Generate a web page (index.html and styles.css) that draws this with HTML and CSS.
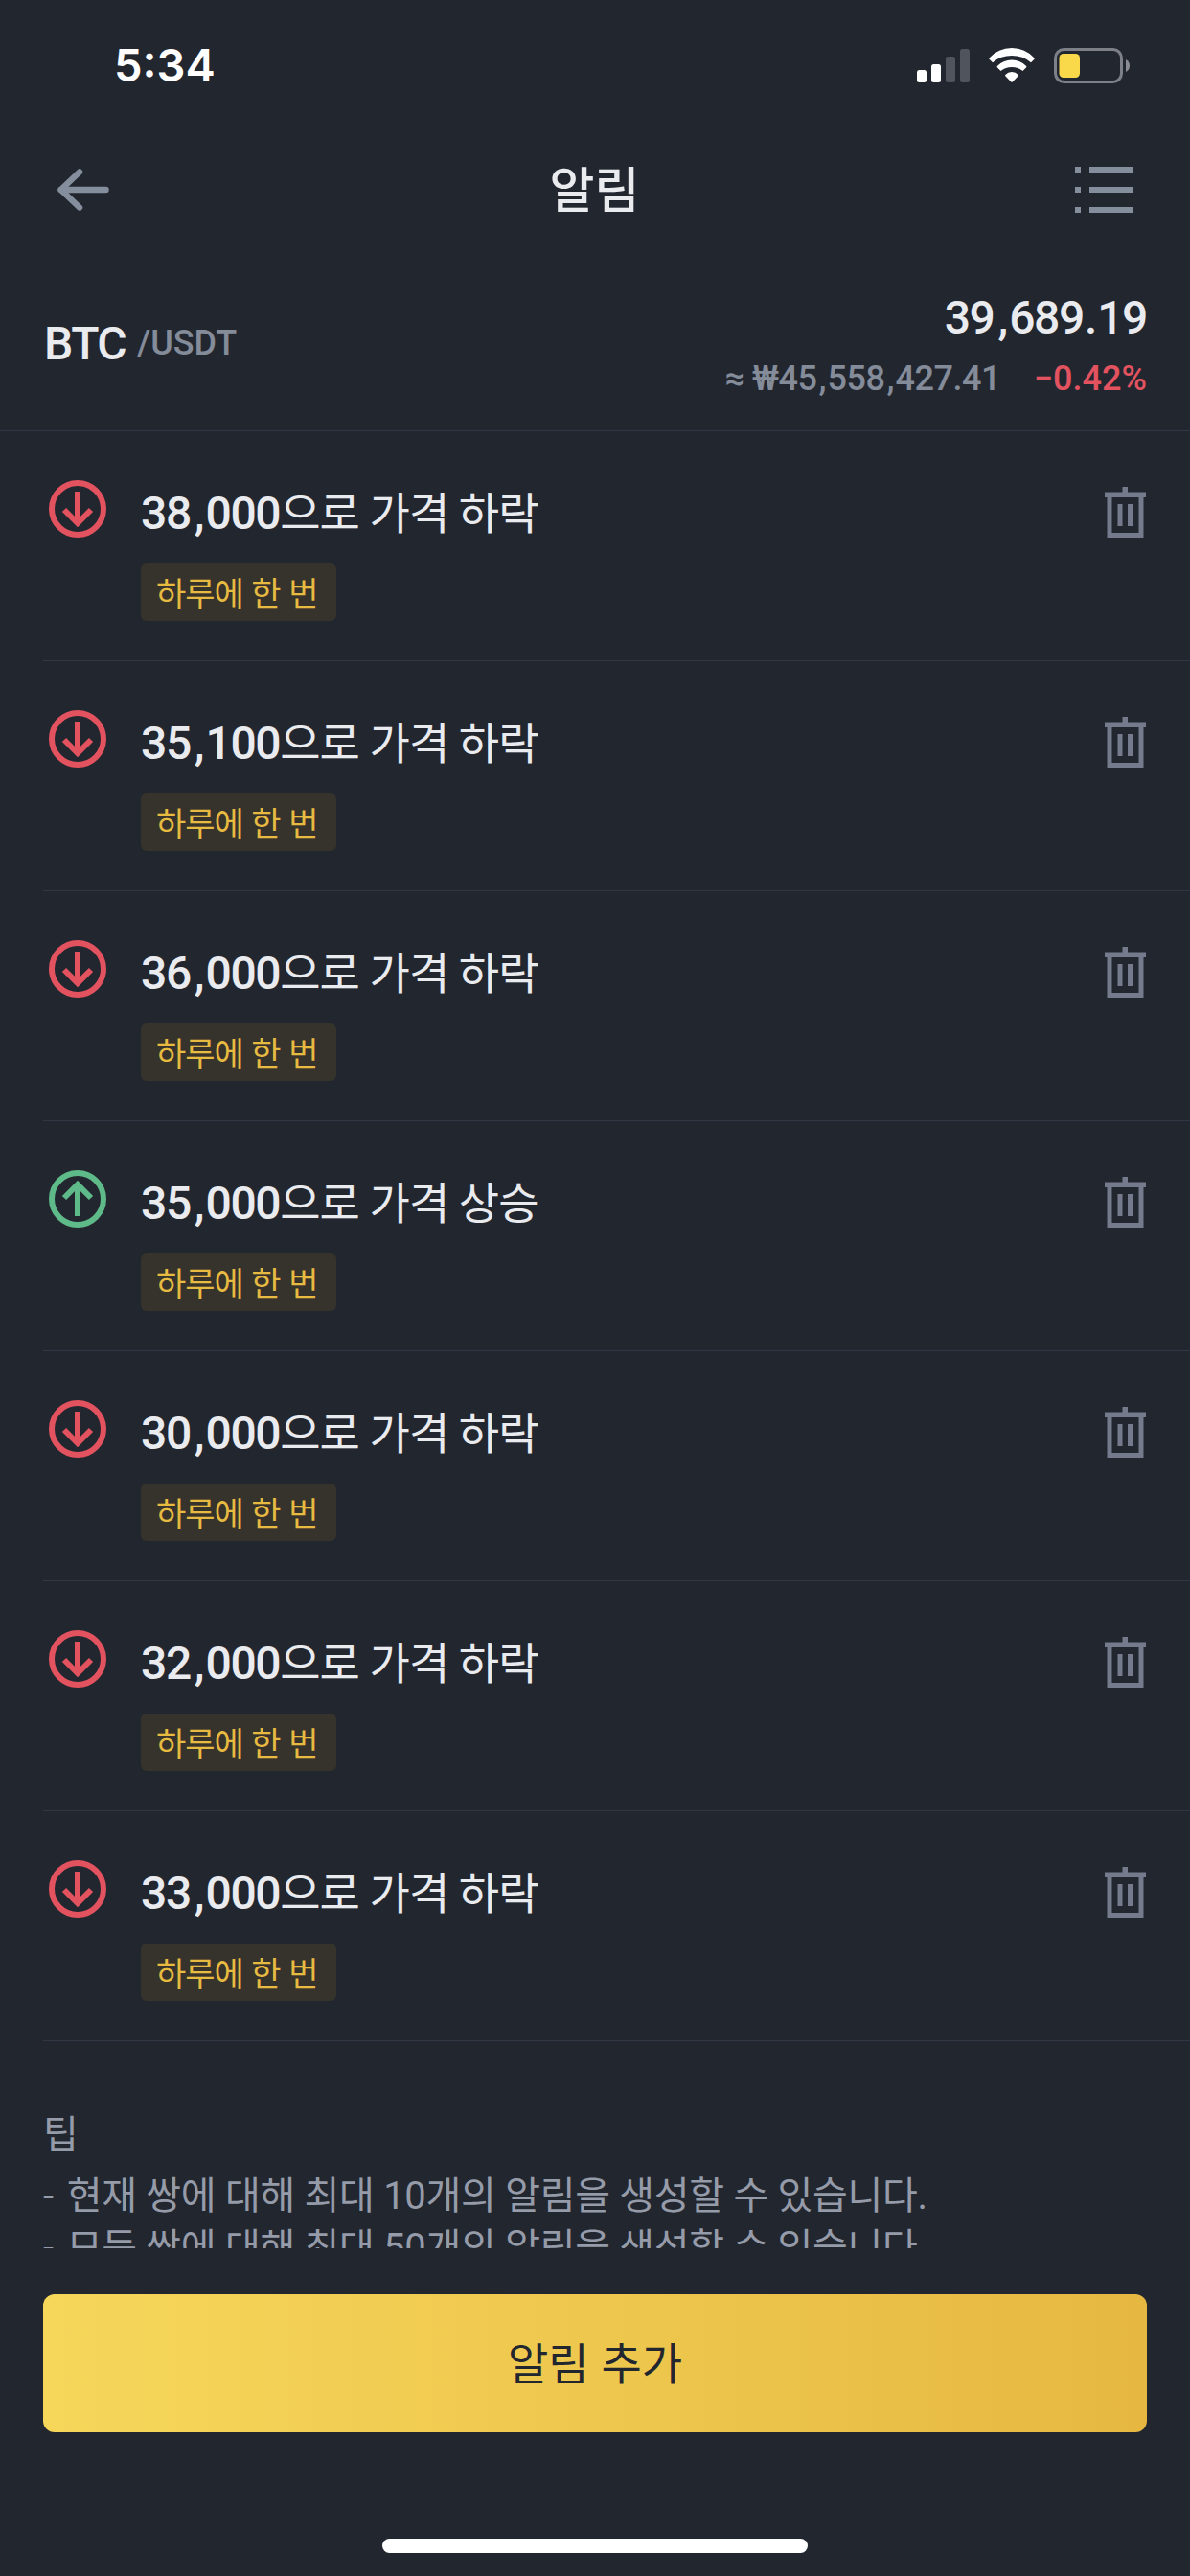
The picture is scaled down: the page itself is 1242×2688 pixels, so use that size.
FILE: index.html
```html
<!DOCTYPE html>
<html lang="ko">
<head>
  <meta charset="UTF-8">
  <meta name="viewport" content="width=device-width, initial-scale=1.0">
  <title>알림</title>
  <link rel="stylesheet" href="styles.css">
</head>
<body>
  <!-- shared icons -->
  <svg class="defs" width="0" height="0">
    <symbol id="down" viewBox="0 0 60 60">
      <circle cx="30" cy="30" r="27" fill="none" stroke="currentColor" stroke-width="6"/>
      <path d="M30 12v33M16 31l14 14 14-14" fill="none" stroke="currentColor" stroke-width="6"/>
    </symbol>
    <symbol id="up" viewBox="0 0 60 60">
      <circle cx="30" cy="30" r="27" fill="none" stroke="currentColor" stroke-width="6"/>
      <path d="M30 48V15M16 29l14-14 14 14" fill="none" stroke="currentColor" stroke-width="6"/>
    </symbol>
    <symbol id="trash" viewBox="0 0 43 53">
      <path d="M18.500 0h5.500v5.500h19v5.500h-2.500v42h-38v-42H0V5.500h18.500zM7.500 11v37h28V11zM13.500 18h5v23h-5zM24 18h5v23h-5z" fill="currentColor" fill-rule="evenodd"/>
    </symbol>
  </svg>

  <div class="status">
    <span class="time">5:34</span>
    <div class="status-icons">
      <svg width="55" height="35" viewBox="0 0 55 35" fill="#fff">
        <rect x="0" y="22" width="10" height="13" rx="2.500"/>
        <rect x="15" y="16" width="10" height="19" rx="2.500"/>
        <rect x="30" y="8" width="10" height="27" rx="2.500" fill="#50545c"/>
        <rect x="45" y="0" width="10" height="35" rx="2.500" fill="#50545c"/>
      </svg>
      <svg class="wifi" width="48" height="36" viewBox="0 0 48 36" fill="#fff">
        <path d="M0.500 10.500Q10 0 24 0t23.500 10.500q.5.700 0 1.300l-3.500 3.500Q36 8 24 8T4 15.300L.5 11.800q-.5-.6 0-1.300z"/>
        <path d="M8.800 19Q15 12.500 24 12.500T39.200 19q.5.700 0 1.300l-3.700 3.700q-5-4-11.500-4t-11.500 4l-3.700-3.700q-.5-.6 0-1.300z"/>
        <path d="M17.300 28q2.700-3 6.700-3t6.700 3q.4.700 0 1.300L24.700 35.500q-.7.700-1.400 0l-6-6.200q-.4-.6 0-1.300z"/>
      </svg>
      <svg width="80" height="37" viewBox="0 0 80 37">
        <rect x="1.500" y="1.500" width="69" height="34" rx="9" fill="none" stroke="#7d8087" stroke-width="3"/>
        <rect x="5.500" y="6" width="21.500" height="25" rx="4.500" fill="#f9d84a"/>
        <path d="M75 12q4 2 4 6.500T75 25z" fill="#8a8c92"/>
      </svg>
    </div>
  </div>

  <div class="navbar">
    <svg width="55" height="44" viewBox="0 0 55 44" fill="none" stroke="#848e9c" stroke-width="6.500" stroke-linecap="round" stroke-linejoin="round">
      <path d="M4.500 22H51.500M24 3.500L4.500 22L24 40.500"/>
    </svg>
    <h1>알림</h1>
    <svg width="60" height="48" viewBox="0 0 60 48" fill="#848e9c">
      <path d="M0 0h6v6H0zM0 21h6v6H0zM0 42h6v6H0zM15 0h45v6H15zM15 21h45v6H15zM15 42h45v6H15z"/>
    </svg>
  </div>

  <div class="ticker">
    <div class="pair"><b>BTC</b><span>/USDT</span></div>
    <div class="quote">
      <div class="price">39<i>,</i>689<i class="dot">.</i>19</div>
      <div class="sub"><span class="krw">≈ ₩45<i>,</i>558<i>,</i>427.41</span><span class="change">−0.42%</span></div>
    </div>
  </div>

  <div class="list">
    <div class="alert">
      <svg class="dir fall"><use href="#down"/></svg>
      <div class="info">
        <div class="name"><span>38<i>,</i>000</span>으로 가격 하락</div>
        <div class="tag">하루에 한 번</div>
      </div>
      <svg class="trash"><use href="#trash"/></svg>
    </div>
    <div class="alert">
      <svg class="dir fall"><use href="#down"/></svg>
      <div class="info">
        <div class="name"><span>35<i>,</i>100</span>으로 가격 하락</div>
        <div class="tag">하루에 한 번</div>
      </div>
      <svg class="trash"><use href="#trash"/></svg>
    </div>
    <div class="alert">
      <svg class="dir fall"><use href="#down"/></svg>
      <div class="info">
        <div class="name"><span>36<i>,</i>000</span>으로 가격 하락</div>
        <div class="tag">하루에 한 번</div>
      </div>
      <svg class="trash"><use href="#trash"/></svg>
    </div>
    <div class="alert">
      <svg class="dir rise"><use href="#up"/></svg>
      <div class="info">
        <div class="name"><span>35<i>,</i>000</span>으로 가격 상승</div>
        <div class="tag">하루에 한 번</div>
      </div>
      <svg class="trash"><use href="#trash"/></svg>
    </div>
    <div class="alert">
      <svg class="dir fall"><use href="#down"/></svg>
      <div class="info">
        <div class="name"><span>30<i>,</i>000</span>으로 가격 하락</div>
        <div class="tag">하루에 한 번</div>
      </div>
      <svg class="trash"><use href="#trash"/></svg>
    </div>
    <div class="alert">
      <svg class="dir fall"><use href="#down"/></svg>
      <div class="info">
        <div class="name"><span>32<i>,</i>000</span>으로 가격 하락</div>
        <div class="tag">하루에 한 번</div>
      </div>
      <svg class="trash"><use href="#trash"/></svg>
    </div>
    <div class="alert">
      <svg class="dir fall"><use href="#down"/></svg>
      <div class="info">
        <div class="name"><span>33<i>,</i>000</span>으로 가격 하락</div>
        <div class="tag">하루에 한 번</div>
      </div>
      <svg class="trash"><use href="#trash"/></svg>
    </div>
  </div>

  <div class="tips">
    <h2>팁</h2>
    <p>- 현재 쌍에 대해 최대 10개의 알림을 생성할 수 있습니다.</p>
    <p>- 모든 쌍에 대해 최대 50개의 알림을 생성할 수 있습니다.</p>
  </div>

  <button class="add">알림 추가</button>
  <div class="home-bar"></div>
</body>
</html>
```
FILE: styles.css
```css
* {
  box-sizing: border-box;
}
body {
  margin: 0;
  width: 1242px;
  height: 2688px;
  overflow: hidden;
  display: flex;
  flex-direction: column;
  background: #22262f;
  color: #eaebef;
  font-family: Roboto, "Noto Sans CJK KR", sans-serif;
}
h1, h2, p {
  margin: 0;
  font-weight: normal;
}
i {
  margin-left: 4px;
  font-style: normal;
  letter-spacing: 1px;
}
.defs {
  position: absolute;
}

/* status bar */
.status {
  height: 136px;
  padding: 0 62px 0 119px;
  display: flex;
  align-items: center;
  justify-content: space-between;
}
.time {
  font-family: Inter, sans-serif;
  font-size: 47px;
  font-weight: 600;
  line-height: 60px;
  color: #fff;
}
.status-icons {
  display: flex;
  align-items: center;
}
.wifi {
  margin: 0 20px;
}

/* title */
.navbar {
  height: 124px;
  padding: 0 60px 0 59px;
  display: flex;
  align-items: center;
  justify-content: space-between;
}
h1 {
  margin: -6px 0 0 5px;
  font-family: "Noto Sans CJK KR", sans-serif;
  font-size: 51px;
  font-weight: 500;
  line-height: 70px;
}

/* price */
.ticker {
  height: 190px;
  padding: 42px 45px 0 46px;
  display: flex;
  justify-content: space-between;
  border-bottom: 1px solid #303643;
}
.pair {
  display: flex;
  padding-top: 27px;
  line-height: 60px;
}
.pair b {
  font-size: 48px;
  font-weight: 500;
  letter-spacing: -1.5px;
}
.pair span {
  margin: -1px 0 0 12px;
  font-size: 36px;
  font-weight: 500;
  color: #848b99;
}
.quote {
  text-align: right;
}
.price {
  font-size: 48px;
  font-weight: 500;
  line-height: 60px;
  letter-spacing: -1.4px;
}
.price .dot {
  margin-left: 1px;
  letter-spacing: 0;
}
.sub {
  margin-top: 9px;
  font-size: 36px;
  font-weight: 500;
  line-height: 48px;
  letter-spacing: -0.5px;
  color: #848b99;
}
.sub i {
  margin-left: 2px;
  letter-spacing: 1px;
}
.change {
  margin-left: 35px;
  letter-spacing: 0;
  color: #e2535f;
}

/* alerts */
.alert {
  height: 240px;
  margin-left: 45px;
  padding: 51px 46px 0 6px;
  display: flex;
  border-bottom: 1px solid #303643;
}
.dir {
  width: 60px;
  height: 60px;
}
.fall {
  color: #e2535f;
}
.rise {
  color: #5fba89;
}
.info {
  flex: 1;
  margin-left: 36px;
}
.name {
  height: 69px;
  font-size: 46px;
  line-height: 69px;
  letter-spacing: -0.9px;
  white-space: nowrap;
}
.name span {
  font-size: 48px;
  font-weight: 500;
  letter-spacing: -1.4px;
}
.tag {
  display: inline-block;
  height: 60px;
  margin-top: 18px;
  padding: 0 20px 0 16px;
  border-radius: 6px;
  background: #35332b;
  color: #e7ba41;
  font-family: "Noto Sans CJK KR", sans-serif;
  font-size: 34px;
  line-height: 59px;
  letter-spacing: -1px;
}
.trash {
  width: 43px;
  height: 53px;
  margin-top: 7px;
  color: #757b8c;
}

/* tips */
.tips {
  height: 216px;
  padding: 71px 45px 0;
  overflow: hidden;
  color: #959ba8;
  font-size: 40px;
  line-height: 54px;
}
.tips h2 {
  margin-bottom: 10px;
  font-size: 40px;
}
.tips p {
  letter-spacing: -0.3px;
}
.tips p::first-letter {
  letter-spacing: 4px;
}

.add {
  height: 144px;
  margin: 48px 45px 0;
  padding: 0 0 6px;
  border: none;
  border-radius: 12px;
  background: linear-gradient(90deg, #f6d75a, #e6b841);
  color: #22262f;
  font-family: "Noto Sans CJK KR", sans-serif;
  font-size: 46px;
}
.home-bar {
  width: 444px;
  height: 15px;
  margin: 111px auto 0;
  border-radius: 8px;
  background: #fff;
}
```
